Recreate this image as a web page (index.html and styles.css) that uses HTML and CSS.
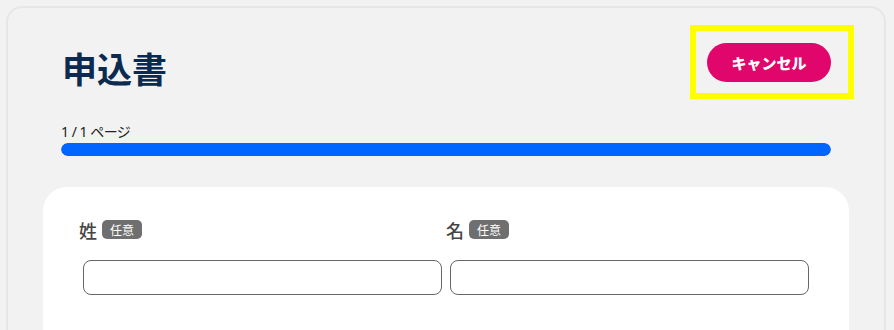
FILE: index.html
```html
<!DOCTYPE html>
<html lang="ja">
<head>
<meta charset="utf-8">
<title>申込書</title>
<link rel="stylesheet" href="styles.css">
</head>
<body>
<div class="page">
  <div class="header">
    <h1 class="title">申込書</h1>
    <div class="highlight"><button class="cancel" type="button">キャンセル</button></div>
  </div>
  <div class="progress">
    <div class="progress-label">1 / 1 ページ</div>
    <div class="progress-track"><div class="progress-fill"></div></div>
  </div>
  <div class="form-card">
    <div class="row">
      <div class="field">
        <label class="label"><span class="label-text">姓</span><span class="badge">任意</span></label>
        <input class="input" type="text">
      </div>
      <div class="field">
        <label class="label"><span class="label-text">名</span><span class="badge">任意</span></label>
        <input class="input" type="text">
      </div>
    </div>
  </div>
</div>
</body>
</html>
```
FILE: styles.css
```css
html, body {
  margin: 0;
  padding: 0;
}
body {
  background: #f2f2f2;
  font-family: "Noto Sans", "Noto Sans CJK JP", sans-serif;
  overflow: hidden;
  height: 330px;
}
.page {
  margin: 6px 8px 0 6px;
  border: 2px solid #e6e6e6;
  border-radius: 16px;
  background: #f2f2f2;
  min-height: 420px;
}
.header {
  display: flex;
  justify-content: space-between;
  align-items: flex-start;
  padding: 17px 30px 0 54px;
}
.title {
  margin: 22px 0 0 0;
  font-family: "Noto Sans CJK JP", sans-serif;
  font-size: 35px;
  line-height: 1.2;
  font-weight: 700;
  color: #0c2a4f;
}
.highlight {
  border: 6px solid #ffff00;
  padding: 12px 17px 11px 11px;
}
.cancel {
  display: block;
  width: 124px;
  height: 39px;
  padding: 0;
  border: none;
  border-radius: 20px;
  background: #e0066b;
  color: #ffffff;
  font-family: "Noto Sans CJK JP", sans-serif;
  font-size: 15px;
  font-weight: 900;
  cursor: pointer;
}
.progress {
  margin-top: 23px;
  padding: 0 53px;
}
.progress-label {
  font-size: 14px;
  line-height: 20px;
  letter-spacing: -0.5px;
  color: #222222;
  margin-bottom: 1px;
}
.progress-track {
  height: 13px;
  border-radius: 7px;
  background: #dde6f5;
  overflow: hidden;
}
.progress-fill {
  width: 100%;
  height: 100%;
  background: #0066ff;
  border-radius: 7px;
}
.form-card {
  margin: 31px 35px 0;
  background: #ffffff;
  border-radius: 24px;
  padding: 29px 36px 40px;
  min-height: 200px;
}
.row {
  display: grid;
  grid-template-columns: 1fr 1fr;
}
.field {
  display: flex;
  flex-direction: column;
}
.label {
  display: flex;
  align-items: center;
  gap: 5px;
  height: 27px;
}
.label-text {
  font-family: "Noto Sans CJK JP", sans-serif;
  font-size: 18px;
  font-weight: 500;
  color: #454545;
}
.badge {
  display: inline-block;
  background: #6f6f6f;
  color: #ffffff;
  font-family: "Noto Sans CJK JP", sans-serif;
  font-size: 12px;
  line-height: 19px;
  padding: 0 8px;
  border-radius: 5px;
}
.input {
  box-sizing: border-box;
  margin: 17px 4px 0;
  width: calc(100% - 8px);
  height: 35px;
  border: 1px solid #666666;
  border-radius: 8px;
  background: #ffffff;
  padding: 0 10px;
  font-size: 16px;
}
```
